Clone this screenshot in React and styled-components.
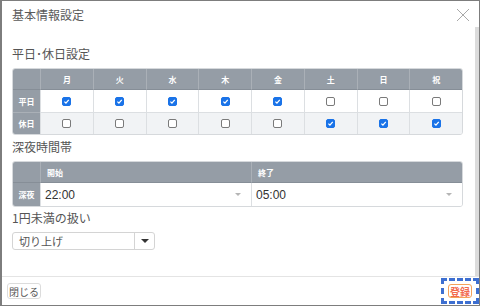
import styled, { createGlobalStyle } from "styled-components";

const Global = createGlobalStyle`
  * { box-sizing: border-box; }
  html, body { margin: 0; padding: 0; background: #fff; }
  body {
    font-family: "Noto Sans CJK JP", "Liberation Sans", sans-serif;
    color: #555;
  }
`;

const Modal = styled.div`
  width: 480px;
  height: 306px;
  border: 1px solid #7d7d7d;
  border-left-width: 2px;
  display: flex;
  flex-direction: column;
  background: #fff;
`;

const Header = styled.div`
  height: 26px;
  display: flex;
  align-items: center;
  justify-content: space-between;
  padding: 2px 9px 0 10px;
`;

const Title = styled.div`
  font-size: 12px;
  line-height: 16px;
  color: #5a5a5a;
`;

const Close = styled.button`
  border: 0;
  background: none;
  padding: 0;
  width: 14px;
  height: 14px;
  display: flex;
`;

const Main = styled.div`
  flex: 1;
  display: flex;
  border-bottom: 1px solid #e4e4e4;
`;

const Body = styled.div`
  flex: 1;
  padding: 19px 12px 0 10px;
`;

const Track = styled.div`
  width: 5px;
  background: #dcdcdc;
`;

const SectionTitle = styled.div`
  font-size: 12px;
  line-height: 16px;
  color: #555;
  margin: ${(p) => p.$top || 0}px 0 6px;
`;

const Grid = styled.div`
  display: grid;
  grid-template-columns: 27px repeat(${(p) => p.$cols}, 1fr);
  border: 1px solid #d6d9dc;
  border-radius: 3px;
  overflow: hidden;
  width: 451px;
`;

const Head = styled.div`
  height: 21px;
  background: #959da6;
  color: #fff;
  font-size: 8px;
  font-weight: bold;
  display: flex;
  align-items: center;
  justify-content: ${(p) => (p.$left ? "flex-start" : "center")};
  padding-left: ${(p) => (p.$left ? "6px" : "0")};
  border-left: ${(p) => (p.$first ? "0" : "1px solid #aab0b7")};
  border-bottom: 1px solid #868e97;
`;

const RowLabel = styled.div`
  height: ${(p) => p.$h || 22}px;
  background: #959da6;
  color: #fff;
  font-size: 8px;
  font-weight: bold;
  display: flex;
  align-items: center;
  justify-content: center;
  border-top: ${(p) => (p.$sep ? "1px solid #aab0b7" : "0")};
`;

const Cell = styled.div`
  height: 22px;
  background: ${(p) => (p.$alt ? "#f1f3f5" : "#fff")};
  border-left: 1px solid #dcdfe2;
  border-top: ${(p) => (p.$sep ? "1px solid #dcdfe2" : "0")};
  display: flex;
  align-items: center;
  justify-content: center;
`;

const Box = styled.span`
  width: 9px;
  height: 9px;
  border-radius: 2px;
  background: ${(p) => (p.$on ? "#1a73e8" : "#fff")};
  border: 1px solid ${(p) => (p.$on ? "#1a73e8" : "#7a7a7a")};
  display: flex;
  align-items: center;
  justify-content: center;
`;

const TimeCell = styled.div`
  height: 23px;
  background: #fff;
  border-left: 1px solid #dcdfe2;
  display: flex;
  align-items: center;
  justify-content: space-between;
  padding: 0 10px 0 4px;
  font-size: 12px;
  color: #333;
  font-family: "Liberation Sans", "Noto Sans CJK JP", sans-serif;
`;

const Caret = styled.span`
  width: 0;
  height: 0;
  border-left: ${(p) => p.$size}px solid transparent;
  border-right: ${(p) => p.$size}px solid transparent;
  border-top: ${(p) => p.$size}px solid ${(p) => p.$color};
`;

const Select = styled.div`
  width: 143px;
  height: 18px;
  border: 1px solid #d4d4d4;
  border-radius: 3px;
  display: flex;
  font-size: 11px;
  color: #555;
`;

const SelectText = styled.div`
  flex: 1;
  display: flex;
  align-items: center;
  padding-left: 6px;
`;

const SelectArrow = styled.div`
  width: 20px;
  border-left: 1px solid #d4d4d4;
  display: flex;
  align-items: center;
  justify-content: center;
`;

const Footer = styled.div`
  height: 28px;
  display: flex;
  align-items: center;
  justify-content: space-between;
  padding: 0 0 0 5px;
`;

const Button = styled.button`
  font-family: inherit;
  font-size: 10px;
  line-height: 13px;
  padding: 0 1px;
  height: ${(p) => (p.$primary ? 14 : 16)}px;
  background: #fff;
  color: ${(p) => (p.$primary ? "#f26a4f" : "#555")};
  border: 1px solid ${(p) => (p.$primary ? "#f5a25a" : "#dcdcdc")};
  border-radius: 3px;
  font-weight: ${(p) => (p.$primary ? "bold" : "normal")};
  display: flex;
  align-items: center;
`;

const FocusRing = styled.span`
  display: flex;
  padding: 3px 4px;
  border: 3px dashed #3d6fd1;
`;

const days = ["月", "火", "水", "木", "金", "土", "日", "祝"];
const weekday = [true, true, true, true, true, false, false, false];
const holiday = [false, false, false, false, false, true, true, true];

function Check({ on }) {
  return (
    <Box $on={on}>
      {on && (
        <svg width="7" height="7" viewBox="0 0 10 10">
          <path d="M2 5.2 L4.2 7.4 L8.2 2.6" fill="none" stroke="#fff" strokeWidth="1.8" />
        </svg>
      )}
    </Box>
  );
}

export default function App() {
  return (
    <>
      <Global />
      <Modal>
        <Header>
          <Title>基本情報設定</Title>
          <Close>
            <svg width="14" height="14" viewBox="0 0 14 14">
              <path d="M1 1 L13 13 M13 1 L1 13" stroke="#a9a9a9" strokeWidth="1" />
            </svg>
          </Close>
        </Header>
        <Main>
          <Body>
            <SectionTitle>平日･休日設定</SectionTitle>
            <Grid $cols={8}>
              <Head $first />
              {days.map((d) => (
                <Head key={d}>{d}</Head>
              ))}
              <RowLabel>平日</RowLabel>
              {weekday.map((v, i) => (
                <Cell key={"w" + i}>
                  <Check on={v} />
                </Cell>
              ))}
              <RowLabel $sep>休日</RowLabel>
              {holiday.map((v, i) => (
                <Cell key={"h" + i} $alt $sep>
                  <Check on={v} />
                </Cell>
              ))}
            </Grid>

            <SectionTitle $top={4}>深夜時間帯</SectionTitle>
            <Grid $cols={2}>
              <Head $first />
              <Head $left>開始</Head>
              <Head $left>終了</Head>
              <RowLabel $h={23}>深夜</RowLabel>
              <TimeCell>
                22:00
                <Caret $size={3} $color="#b5b5b5" />
              </TimeCell>
              <TimeCell>
                05:00
                <Caret $size={3} $color="#b5b5b5" />
              </TimeCell>
            </Grid>

            <SectionTitle $top={3}>1円未満の扱い</SectionTitle>
            <Select>
              <SelectText>切り上げ</SelectText>
              <SelectArrow>
                <Caret $size={4} $color="#333" />
              </SelectArrow>
            </Select>
          </Body>
          <Track />
        </Main>
        <Footer>
          <Button>閉じる</Button>
          <FocusRing>
            <Button $primary>登録</Button>
          </FocusRing>
        </Footer>
      </Modal>
    </>
  );
}
